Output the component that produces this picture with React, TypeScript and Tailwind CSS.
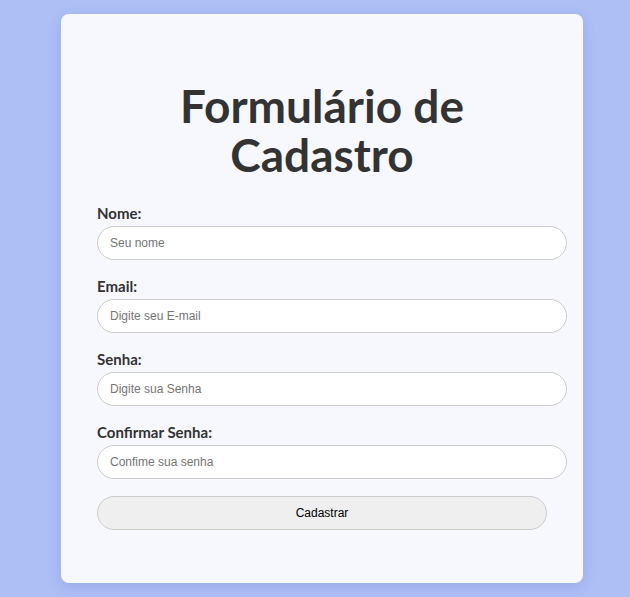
const fields = [
  { label: "Nome:", type: "text", placeholder: "Seu nome" },
  { label: "Email:", type: "email", placeholder: "Digite seu E-mail" },
  { label: "Senha:", type: "password", placeholder: "Digite sua Senha" },
  { label: "Confirmar Senha:", type: "password", placeholder: "Confime sua senha" },
];

export default function App() {
  return (
    <div className="min-h-[597px] w-full bg-[#adbff5] pt-[14px] pb-[14px] font-['Lato',sans-serif]">
      <div className="ml-[61px] w-[522px] rounded-lg bg-[#f7f8fd] px-9 pt-[67px] pb-[53px] shadow-[0_4px_14px_rgba(40,60,140,0.15)]">
        <h1 className="mb-[25px] text-center text-[46px] leading-[49px] font-bold text-[#333333]">
          Formulário de
          <br />
          Cadastro
        </h1>
        <form onSubmit={(e) => e.preventDefault()}>
          {fields.map((f) => (
            <div key={f.label} className="mb-[17px]">
              <label className="mb-1 block text-[15px] leading-[18px] font-bold text-[#333333]">
                {f.label}
              </label>
              <input
                type={f.type}
                placeholder={f.placeholder}
                className="block h-[34px] w-[470px] rounded-full border border-[#cccccc] bg-white px-3 font-['Liberation_Sans',Arial,sans-serif] text-[12px] text-[#333] placeholder:text-[#757575] outline-none"
              />
            </div>
          ))}
          <button
            type="submit"
            className="mt-px block h-[34px] w-full rounded-full border border-[#cccccc] bg-[#efefef] font-['Liberation_Sans',Arial,sans-serif] text-[12px] text-black"
          >
            Cadastrar
          </button>
        </form>
      </div>
    </div>
  );
}
